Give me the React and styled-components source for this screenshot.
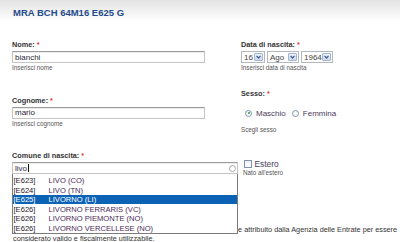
import styled, { createGlobalStyle } from "styled-components";

const Global = createGlobalStyle`
  html, body {
    margin: 0;
    padding: 0;
    background: #fff;
  }
  body {
    font-family: "Liberation Sans", Arial, sans-serif;
  }
`;

const Page = styled.div`
  position: relative;
  width: 400px;
  height: 242px;
  overflow: hidden;
  background: linear-gradient(#e3e3e3, #fff 22px);
`;

const Header = styled.div`
  padding: 7px 0 0 13px;
`;

const Title = styled.h1`
  margin: 0;
  font-size: 9.5px;
  line-height: 11px;
  font-weight: bold;
  color: #1f4b8a;
`;

const Form = styled.div`
  display: grid;
  grid-template-columns: 229px 1fr;
  padding: 22px 0 0 12px;
`;

const Column = styled.div`
  display: flex;
  flex-direction: column;
  gap: ${(p) => p.$gap || 0}px;
`;

const Field = styled.div`
  display: flex;
  flex-direction: column;
  margin-top: ${(p) => p.$mt || 0}px;
`;

const Label = styled.label`
  font-size: 7.3px;
  line-height: 10px;
  font-weight: bold;
  color: #333;

  span {
    color: #e2322f;
  }
`;

const Help = styled.div`
  margin-top: ${(p) => (p.$mt === undefined ? 1 : p.$mt)}px;
  padding-left: ${(p) => p.$pl || 0}px;
  font-size: 6.3px;
  line-height: 8px;
  color: #555;
`;

const InputWrap = styled.div`
  position: relative;
  width: ${(p) => p.$w}px;
  margin-top: 1px;
`;

const TextBox = styled.div`
  display: flex;
  align-items: center;
  box-sizing: border-box;
  height: 12px;
  padding: 0 2px;
  border: 1px solid #c4c4c4;
  border-top-color: #9c9c9c;
  box-shadow: inset 0 1px 0 #ececec;
  background: #fff;
  font-size: 8px;
  color: #2e2a33;
`;

const Caret = styled.i`
  display: inline-block;
  width: 1px;
  height: 8px;
  margin-left: 0.5px;
  background: #111;
`;

const Spinner = styled.i`
  position: absolute;
  right: 2px;
  top: 2.5px;
  box-sizing: border-box;
  width: 7px;
  height: 7px;
  border: 1px solid #a9a9a9;
  border-radius: 50%;
`;

const List = styled.ul`
  position: absolute;
  top: 100%;
  left: 0;
  right: 0;
  z-index: 5;
  margin: 0;
  padding: 1.75px 0 0;
  list-style: none;
  background: #fff;
  border: 1px solid #7c7c7c;
  border-top: none;
`;

const Option = styled.li`
  display: flex;
  height: 9.5px;
  align-items: center;
  padding-left: 0.5px;
  font-size: 7.6px;
  background: ${(p) => (p.$active ? "#0c63b5" : "transparent")};
  color: ${(p) => (p.$active ? "#fff" : "#1e1b2a")};
`;

const Code = styled.span`
  width: 35px;
`;

const Name = styled.span`
  color: ${(p) => (p.$active ? "#fff" : "#4a2a58")};
`;

const Selects = styled.div`
  display: flex;
  gap: 2px;
  margin-top: 1px;
`;

const SelectBox = styled.div`
  display: flex;
  align-items: center;
  box-sizing: border-box;
  width: ${(p) => p.$w}px;
  height: 12px;
  padding: 1px;
  border: 1px solid #b3b8bf;
  background: #fff;
`;

const SelectValue = styled.span`
  flex: 1;
  padding-left: 1px;
  font-size: 8px;
  color: #444;
`;

const ArrowBtn = styled.span`
  display: flex;
  align-items: center;
  justify-content: center;
  box-sizing: border-box;
  width: 9px;
  height: 100%;
  border: 1px solid #a3b4cf;
  border-radius: 1px;
  background: linear-gradient(#eef3fa, #cfdbec);
`;

const Row = styled.div`
  display: flex;
  align-items: center;
  height: ${(p) => p.$h}px;
  margin-top: ${(p) => p.$mt}px;
  padding-left: ${(p) => p.$pl}px;
`;

const Radio = styled.span`
  position: relative;
  box-sizing: border-box;
  width: 7px;
  height: 7px;
  margin-right: 4px;
  border: 1px solid #7f93ad;
  border-radius: 50%;
  background: linear-gradient(#f4f6f9, #fff);

  &::after {
    content: "";
    display: ${(p) => (p.$checked ? "block" : "none")};
    position: absolute;
    left: 1.5px;
    top: 1.5px;
    width: 2px;
    height: 2px;
    border-radius: 50%;
    background: #2fa23a;
  }
`;

const Check = styled.span`
  box-sizing: border-box;
  width: 7.5px;
  height: 7.5px;
  margin-right: 3px;
  border: 1px solid #7f93ad;
  background: linear-gradient(#eef2f7, #fff);
`;

const Choice = styled.span`
  margin-right: ${(p) => p.$mr || 0}px;
  font-size: ${(p) => p.$size || 8}px;
  color: #4b3c5c;
`;

const Note = styled.p`
  margin: 47.5px 0 0;
  padding-left: 13px;
  font-size: 7.3px;
  line-height: 9.5px;
  color: #333;
  white-space: nowrap;
`;

const Chevron = () => (
  <svg width="5" height="4" viewBox="0 0 5 4">
    <polyline points="0.5,0.8 2.5,3 4.5,0.8" fill="none" stroke="#3a5a8e" strokeWidth="1.2" />
  </svg>
);

const comuni = [
  ["[E623]", "LIVO (CO)"],
  ["[E624]", "LIVO (TN)"],
  ["[E625]", "LIVORNO (LI)"],
  ["[E626]", "LIVORNO FERRARIS (VC)"],
  ["[E626]", "LIVORNO PIEMONTE (NO)"],
  ["[E626]", "LIVORNO VERCELLESE (NO)"],
];

function Select({ w, value }) {
  return (
    <SelectBox $w={w}>
      <SelectValue>{value}</SelectValue>
      <ArrowBtn>
        <Chevron />
      </ArrowBtn>
    </SelectBox>
  );
}

export default function App() {
  return (
    <Page>
      <Global />
      <Header>
        <Title>MRA BCH 64M16 E625 G</Title>
      </Header>

      <Form>
        <Column $gap={23.5}>
          <Field>
            <Label>
              Nome: <span>*</span>
            </Label>
            <InputWrap $w={193}>
              <TextBox>bianchi</TextBox>
            </InputWrap>
            <Help>Inserisci nome</Help>
          </Field>

          <Field>
            <Label>
              Cognome: <span>*</span>
            </Label>
            <InputWrap $w={193}>
              <TextBox>mario</TextBox>
            </InputWrap>
            <Help>Inserisci cognome</Help>
          </Field>

          <Field>
            <Label>
              Comune di nascita: <span>*</span>
            </Label>
            <InputWrap $w={226}>
              <TextBox>
                livo
                <Caret />
              </TextBox>
              <Spinner />
              <List>
                {comuni.map(([code, name], i) => (
                  <Option key={i} $active={i === 2}>
                    <Code>{code}</Code>
                    <Name $active={i === 2}>{name}</Name>
                  </Option>
                ))}
              </List>
            </InputWrap>
          </Field>
        </Column>

        <Column>
          <Field>
            <Label>
              Data di nascita: <span>*</span>
            </Label>
            <Selects>
              <Select w={24} value="16" />
              <Select w={32} value="Ago" />
              <Select w={32} value="1964" />
            </Selects>
            <Help>Inserisci data di nascita</Help>
          </Field>

          <Field $mt={17}>
            <Label>
              Sesso: <span>*</span>
            </Label>
            <Row $h={12} $mt={8} $pl={4}>
              <Radio $checked />
              <Choice $mr={6}>Maschio</Choice>
              <Radio />
              <Choice>Femmina</Choice>
            </Row>
            <Help $mt={7}>Scegli sesso</Help>
          </Field>

          <Field>
            <Row $h={10} $mt={25} $pl={3}>
              <Check />
              <Choice $size={8.4}>Estero</Choice>
            </Row>
            <Help $mt={0} $pl={2}>
              Nato all'estero
            </Help>
          </Field>
        </Column>
      </Form>

      <Note>
        Attenzione: il codice fiscale così calcolato, dovrà poi essere verificato e attribuito dalla Agenzia delle Entrate per essere
        <br />
        considerato valido e fiscalmente utilizzabile.
      </Note>
    </Page>
  );
}
